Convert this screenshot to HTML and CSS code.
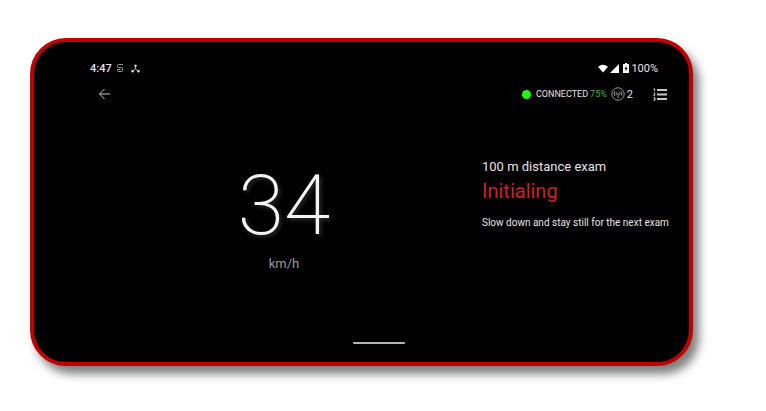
FILE: index.html
```html
<!DOCTYPE html>
<html lang="en">
<head>
<meta charset="utf-8">
<meta name="viewport" content="width=device-width, initial-scale=1">
<title>Distance exam</title>
<link rel="stylesheet" href="styles.css">
</head>
<body>
<div class="phone">
  <div class="status-bar">
    <div class="status-left">
      <span class="clock">4:47</span>
      <svg class="icon-app" viewBox="0 0 8 10" aria-hidden="true"><path d="M7 1.500H2.500Q1.500 1.500 1.500 2.500V3.500Q1.500 4.500 2.500 4.500H5.500Q6.500 4.500 6.500 5.500V7.500Q6.500 8.500 5.500 8.500H2.500Q1.500 8.500 1.500 7.500V6.500H4.500"/></svg>
      <svg class="icon-hub" viewBox="0 0 10 10" aria-hidden="true"><path d="M5 2V5.500L2 8M5 5.500L8 8"/><circle cx="5" cy="2" r="1.500"/><circle cx="1.800" cy="8" r="1.500"/><circle cx="8.200" cy="8" r="1.500"/></svg>
    </div>
    <div class="status-right">
      <svg class="icon-wifi" viewBox="0 0 12 10" aria-hidden="true"><path d="M6 9.800L0 3Q6-2 12 3Z"/></svg>
      <svg class="icon-signal" viewBox="0 0 9 9" aria-hidden="true"><path d="M0 9L9 0V9Z"/></svg>
      <svg class="icon-battery" viewBox="0 0 6 10" aria-hidden="true"><path fill-rule="evenodd" d="M2 0H4V1H5.500Q6 1 6 1.500V9.500Q6 10 5.500 10H.5Q0 10 0 9.500V1.500Q0 1 .5 1H2ZM3.400 2.800L1.500 6H2.700V8.300L4.600 5H3.400Z"/></svg>
      <span class="battery-level">100%</span>
    </div>
  </div>
  <header class="toolbar">
    <button class="icon-button" type="button" aria-label="Back">
      <svg class="icon-back" viewBox="0 0 12 12" aria-hidden="true"><path d="M12 6H1.500M6.500 1L1.500 6L6.500 11"/></svg>
    </button>
    <div class="connection">
      <span class="dot"></span>
      <span class="connected">CONNECTED</span>
      <span class="charge">75%</span>
      <svg class="icon-antenna" viewBox="0 0 14 14" aria-hidden="true"><circle cx="7" cy="7" r="6.200"/><path d="M4 4.200Q2.200 6.500 4 8.800M10 4.200Q11.800 6.500 10 8.800M5.500 5.200Q4.600 6.500 5.500 7.800M8.500 5.200Q9.400 6.500 8.500 7.800M7 6V11"/></svg>
      <span class="satellites">2</span>
      <button class="icon-button" type="button" aria-label="Exam list">
        <svg class="icon-list" viewBox="0 0 15 13" aria-hidden="true"><path class="bars" d="M4 2H14M4 6.500H14M4 11H14"/><path class="marks" d="M.5.800H1.600V3.400M.5 5.200H2V6L.7 7.600H2.200M.5 9.700H2V12.300H.5M1 11H2"/></svg>
      </button>
    </div>
  </header>
  <main class="exam">
    <section class="speed">
      <span class="value">34</span>
      <span class="unit">km/h</span>
    </section>
    <section class="details">
      <h1 class="title">100 m distance exam</h1>
      <p class="state">Initialing</p>
      <p class="hint">Slow down and stay still for the next exam</p>
    </section>
  </main>
  <div class="home-bar"></div>
</div>
</body>
</html>
```
FILE: styles.css
```css
* {
  box-sizing: border-box;
}

body {
  margin: 0;
  padding: 38px 73px 45px 30px;
  min-height: 100vh;
  display: flex;
  background: #fff;
  color: #e4e4e4;
  font-family: Roboto, "Liberation Sans", sans-serif;
}

.phone {
  flex: 1;
  display: flex;
  flex-direction: column;
  padding: 18px 21px 18px 56px;
  border: 4px solid #c00000;
  border-radius: 36px;
  background: #000;
  box-shadow: 6px 8px 10px rgba(0, 0, 0, 0.5);
}

.status-bar,
.toolbar,
.status-left,
.status-right,
.connection {
  display: flex;
  align-items: center;
}

.status-bar,
.toolbar {
  justify-content: space-between;
}

.status-bar {
  height: 16px;
  padding-right: 10px;
  font-size: 11px;
  font-weight: 500;
}

.status-left {
  gap: 4px;
}

.status-right {
  gap: 2px;
}

.battery-level {
  font-weight: 400;
}

svg {
  display: block;
  flex: none;
  fill: none;
  stroke: #c8c8c8;
}

.icon-app {
  width: 8px;
  height: 10px;
  stroke: #999;
}

.icon-hub {
  width: 9px;
  height: 9px;
  margin-left: 3px;
}

.icon-hub circle {
  fill: #c8c8c8;
  stroke: none;
}

.icon-wifi,
.icon-signal,
.icon-battery {
  fill: #fff;
  stroke: none;
}

.icon-wifi {
  width: 10px;
  height: 9px;
}

.icon-signal {
  width: 9px;
  height: 9px;
}

.icon-battery {
  width: 6px;
  height: 10px;
  margin-left: 2px;
}

.toolbar {
  height: 20px;
  margin-top: 8px;
  padding-left: 8px;
}

.icon-button {
  padding: 0;
  border: 0;
  background: none;
}

.icon-back {
  width: 12px;
  height: 12px;
}

.connection {
  font-size: 9px;
}

.dot {
  width: 9px;
  height: 9px;
  margin-right: 5px;
  border-radius: 50%;
  background: #20f80c;
}

.charge {
  margin: 0 4px 0 2px;
  color: #3fb83f;
}

.icon-antenna {
  width: 14px;
  height: 14px;
  stroke: #999;
}

.satellites {
  margin: 0 20px 0 2px;
  font-size: 11px;
}

.icon-list {
  width: 15px;
  height: 13px;
}

.icon-list .bars {
  stroke-width: 2;
}

.exam {
  flex: 1;
  display: grid;
  grid-template-columns: 1fr 186px;
}

.speed {
  display: flex;
  flex-direction: column;
  align-items: center;
  padding: 52px 4px 0 0;
}

.value {
  font-size: 84px;
  font-weight: 200;
  line-height: 100px;
  color: #f4f4f4;
  text-shadow: 2px 2px 4px rgba(255, 255, 255, 0.2);
}

.unit {
  font-size: 13px;
  line-height: 16px;
  color: #999;
}

.details {
  padding-top: 55px;
  white-space: nowrap;
}

.title,
.state,
.hint {
  margin: 0;
  font-weight: 400;
}

.title {
  font-size: 13px;
  line-height: 16px;
}

.state {
  margin-top: 4px;
  font-size: 20px;
  line-height: 24px;
  color: #c9222b;
}

.hint {
  margin-top: 14px;
  font-size: 10px;
  line-height: 12px;
}

.home-bar {
  align-self: center;
  width: 52px;
  height: 2px;
  border-radius: 1px;
  background: #b4b4b4;
}
```
